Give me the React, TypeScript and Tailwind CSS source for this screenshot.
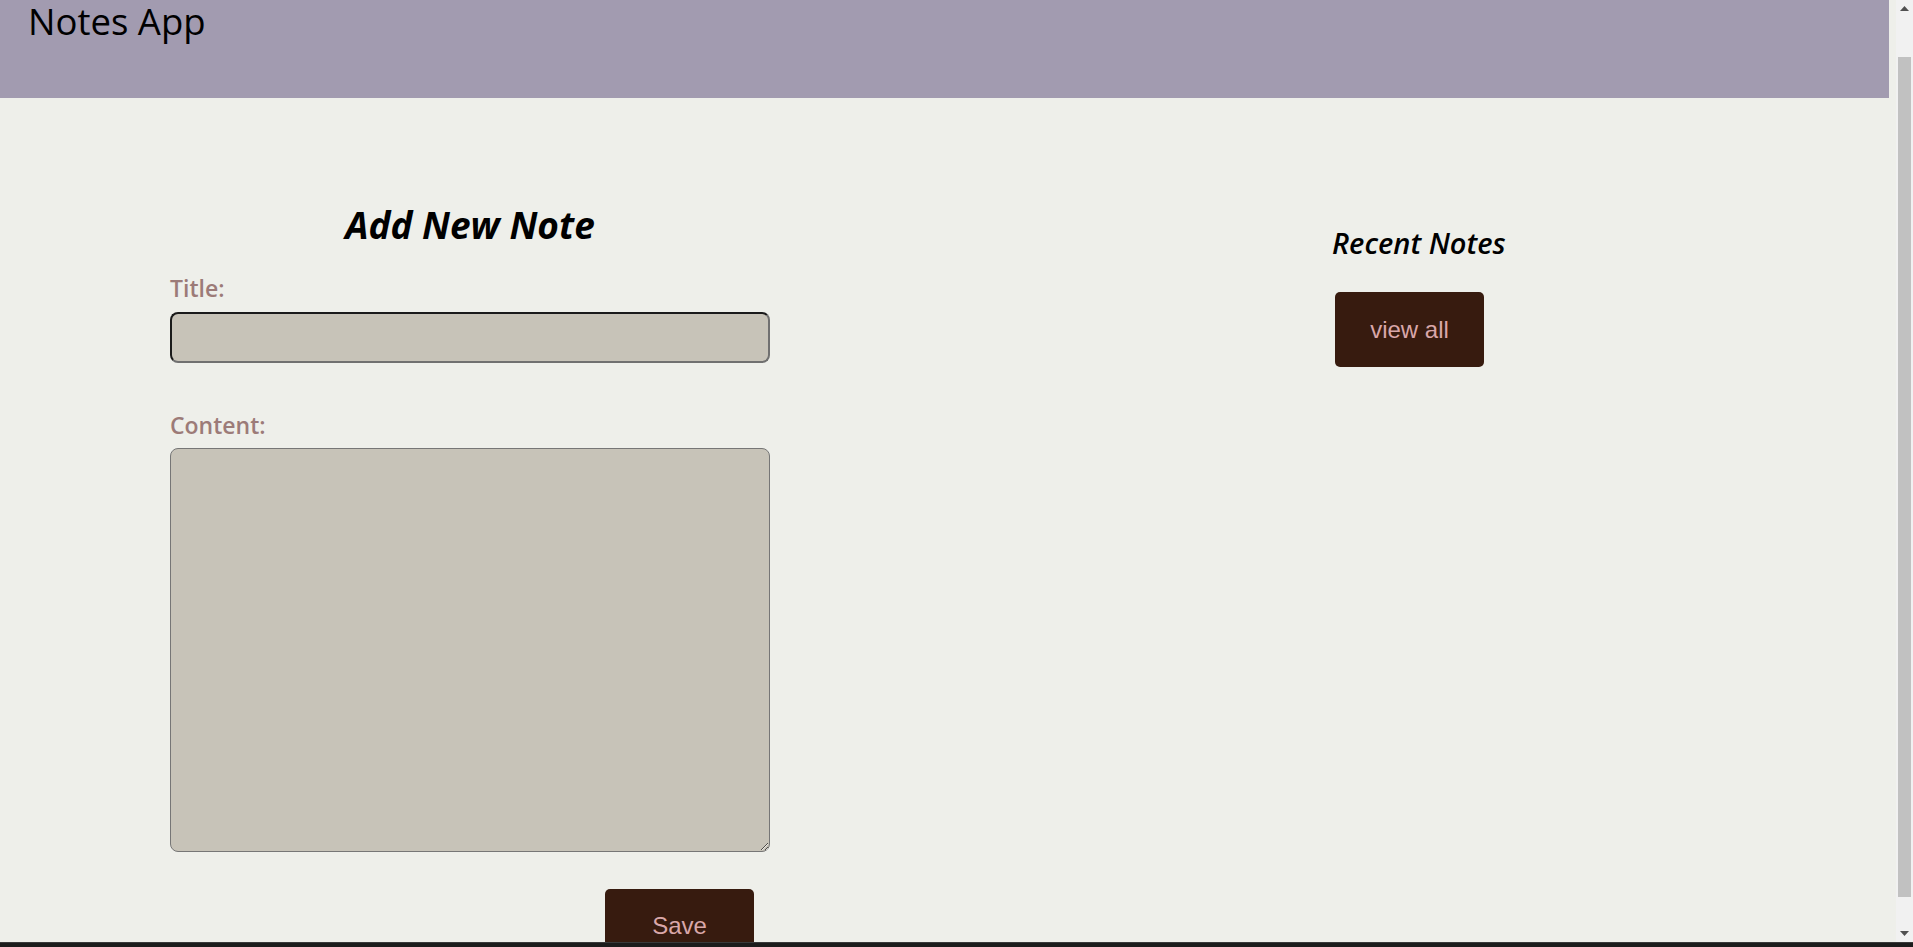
import React, { useState } from 'react';

const sans = "font-['Open_Sans','Noto_Sans',sans-serif]";
const btnFont = "font-['Liberation_Sans',Arial,sans-serif]";

function FakeScrollbar() {
  return (
    <div className="w-[17px] shrink-0 bg-[#f1f1f1] flex flex-col">
      <div className="h-[17px] flex items-center justify-center">
        <svg width="9" height="5" viewBox="0 0 9 5">
          <polygon points="0,5 4.5,0 9,5" fill="#505050" />
        </svg>
      </div>
      <div className="h-[40px]" />
      <div className="h-[840px] mx-[2px] bg-[#c1c1c1]" />
      <div className="flex-1" />
      <div className="h-[17px] flex items-center justify-center">
        <svg width="9" height="5" viewBox="0 0 9 5">
          <polygon points="0,0 9,0 4.5,5" fill="#505050" />
        </svg>
      </div>
    </div>
  );
}

export default function App() {
  const [title, setTitle] = useState('');
  const [content, setContent] = useState('');

  return (
    <div className="h-screen w-full flex flex-col overflow-hidden bg-[#eeefea]">
      <div className="flex-1 flex min-h-0">
        <div className="flex-1 flex flex-col min-w-0 overflow-hidden">
          <header className="h-[98px] shrink-0 mr-[7px] bg-[#a29bb0] pl-[28px] pt-[4px]">
            <h1 className={`${sans} text-[36.5px] leading-[0.95] font-normal text-black`}>Notes App</h1>
          </header>

          <main className="flex pl-[170px]">
            {/* add note form */}
            <form
              className="w-[600px] flex flex-col"
              onSubmit={e => {
                e.preventDefault();
              }}
            >
              <h2 className={`${sans} mt-[107.6px] text-[37px] leading-none font-bold italic text-black text-center`}>
                Add New Note
              </h2>
              <label htmlFor="title" className={`${sans} mt-[34px] text-[23px] leading-none font-semibold text-[#9c7b78]`}>
                Title:
              </label>
              <input
                id="title"
                type="text"
                value={title}
                onChange={e => setTitle(e.target.value)}
                className="mt-[12.4px] h-[51px] w-full rounded-[8px] border-2 border-t-[#1a1a1a] border-l-[#1a1a1a] border-b-[#707070] border-r-[#707070] bg-[#c7c3b8] px-2 outline-none"
              />
              <label htmlFor="content" className={`${sans} mt-[50.6px] text-[23px] leading-none font-semibold text-[#9c7b78]`}>
                Content:
              </label>
              <textarea
                id="content"
                value={content}
                onChange={e => setContent(e.target.value)}
                className="mt-[11.4px] h-[404px] w-full rounded-[8px] border border-[#767676] bg-[#c7c3b8] p-2 outline-none"
              />
              <button
                type="submit"
                className={`${btnFont} mt-[37px] self-end mr-[16px] h-[75px] w-[149px] shrink-0 rounded-[5px] bg-[#371b0f] text-[24px] text-[#d9a7a9]`}
              >
                Save
              </button>
            </form>

            {/* recent notes */}
            <section className="ml-[562px] flex flex-col items-start">
              <h3 className={`${sans} mt-[130.25px] text-[29px] leading-none font-semibold italic text-black`}>
                Recent Notes
              </h3>
              <button
                type="button"
                className={`${btnFont} mt-[34.75px] ml-[3px] h-[75px] w-[149px] rounded-[5px] bg-[#371b0f] text-[24px] text-[#d9a7a9]`}
              >
                view all
              </button>
            </section>
          </main>
        </div>
        <FakeScrollbar />
      </div>
      <div className="h-[5px] shrink-0 border-t border-[#3a3a3a] bg-[#1c1c1c]" />
    </div>
  );
}
